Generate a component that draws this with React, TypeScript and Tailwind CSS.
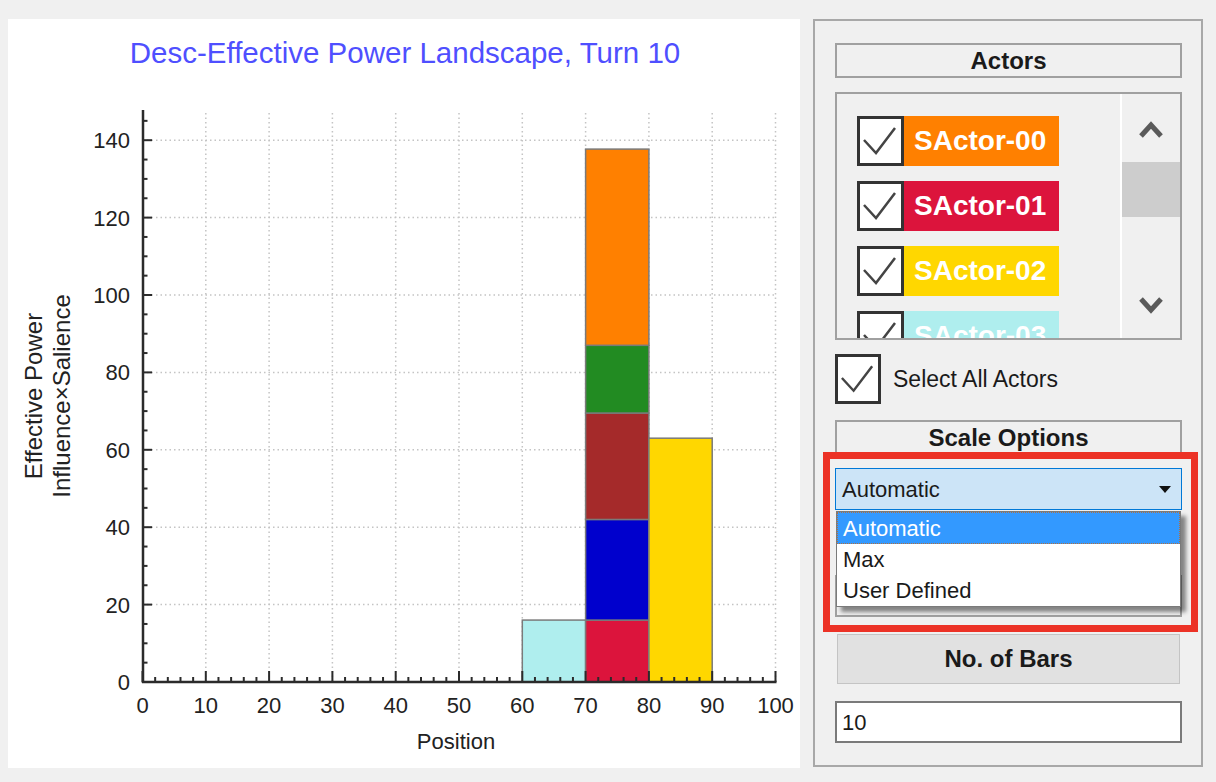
import React from "react";

const X = (v: number) => 142.5 + v * 6.33;
const Y = (v: number) => 682 - v * 3.87;

interface Segment {
  pos: number;
  from: number;
  to: number;
  color: string;
}

const segments: Segment[] = [
  { pos: 60, from: 0, to: 16, color: "#afeeee" },
  { pos: 70, from: 0, to: 16, color: "#dc143c" },
  { pos: 70, from: 16, to: 42, color: "#0000cd" },
  { pos: 70, from: 42, to: 69.5, color: "#a52a2a" },
  { pos: 70, from: 69.5, to: 87, color: "#228b22" },
  { pos: 70, from: 87, to: 137.7, color: "#ff8000" },
  { pos: 80, from: 0, to: 63, color: "#ffd700" },
];

const actors = [
  { name: "SActor-00", color: "bg-[#ff8000]" },
  { name: "SActor-01", color: "bg-[#dc143c]" },
  { name: "SActor-02", color: "bg-[#ffd700]" },
  { name: "SActor-03", color: "bg-[#afeeee]" },
];

const font = { fontFamily: '"Liberation Sans", Arial, sans-serif' };

function Chart() {
  const yTicks: number[] = [];
  for (let v = 0; v <= 145; v += 5) yTicks.push(v);
  const xTicks: number[] = [];
  for (let v = 0; v <= 100; v += 2) xTicks.push(v);
  const grid = [20, 40, 60, 80, 100, 120, 140];
  const vgrid = [10, 20, 30, 40, 50, 60, 70, 80, 90, 100];

  return (
    <svg width="792" height="749" viewBox="8 19 792 749" style={font}>
      <text x="405" y="63" textAnchor="middle" fontSize="29.5" fill="#4f4fff">
        Desc-Effective Power Landscape, Turn 10
      </text>

      {grid.map((v) => (
        <line key={"h" + v} x1={X(0)} x2={X(100)} y1={Y(v)} y2={Y(v)} stroke="#c4c4c4" strokeWidth="1.5" strokeDasharray="1.5 3" />
      ))}
      {vgrid.map((v) => (
        <line key={"v" + v} x1={X(v)} x2={X(v)} y1={113} y2={682} stroke="#c4c4c4" strokeWidth="1.5" strokeDasharray="1.5 3" />
      ))}

      {segments.map((s, i) => (
        <rect
          key={i}
          x={X(s.pos)}
          y={Y(s.to)}
          width={X(s.pos + 10) - X(s.pos)}
          height={Y(s.from) - Y(s.to)}
          fill={s.color}
          stroke="#7a7a7a"
          strokeWidth="1.5"
        />
      ))}

      <line x1="143" x2="143" y1="110" y2="683" stroke="#2b2b2b" strokeWidth="2.5" />
      <line x1="142" x2={X(100) + 1} y1="682" y2="682" stroke="#2b2b2b" strokeWidth="2.5" />

      {yTicks.map((v) => (
        <line key={"yt" + v} x1="143" x2={v % 20 === 0 ? 152 : 147.5} y1={Y(v)} y2={Y(v)} stroke="#2b2b2b" strokeWidth="2" />
      ))}
      {xTicks.map((v) => (
        <line key={"xt" + v} x1={X(v)} x2={X(v)} y1="682" y2={v % 10 === 0 ? 671 : 677} stroke="#2b2b2b" strokeWidth="2" />
      ))}

      {[0, 20, 40, 60, 80, 100, 120, 140].map((v) => (
        <text key={"yl" + v} x="130" y={Y(v) + 8} textAnchor="end" fontSize="22" fill="#222">
          {v}
        </text>
      ))}
      {[0, 10, 20, 30, 40, 50, 60, 70, 80, 90, 100].map((v) => (
        <text key={"xl" + v} x={X(v)} y="713" textAnchor="middle" fontSize="22" fill="#222">
          {v}
        </text>
      ))}

      <text transform="translate(42,396) rotate(-90)" textAnchor="middle" fontSize="24" fill="#222">
        Effective Power
      </text>
      <text transform="translate(70,396) rotate(-90)" textAnchor="middle" fontSize="24" fill="#222">
        Influence×Salience
      </text>
      <text x="456" y="749" textAnchor="middle" fontSize="22" fill="#222">
        Position
      </text>
    </svg>
  );
}

function Check({ w, h }: { w: string; h: string }) {
  return (
    <div className={`${w} ${h} shrink-0 border-[3px] border-[#333] bg-white`}>
      <svg width="100%" height="100%" viewBox="0 0 41 44">
        <polyline points="4,21 16,34 35,9" fill="none" stroke="#444" strokeWidth="2.5" />
      </svg>
    </div>
  );
}

function Chevron({ up }: { up?: boolean }) {
  return (
    <svg width="24" height="17" viewBox="0 0 24 17" className="mx-auto block">
      <polyline
        points={up ? "2,15 12,4 22,15" : "2,2 12,13 22,2"}
        fill="none"
        stroke="#5a5a5a"
        strokeWidth="5"
      />
    </svg>
  );
}

export default function App() {
  return (
    <div className="relative flex w-[1216px] h-[782px] bg-[#f0f0f0] pl-[8px] pt-[19px] gap-[13px] text-[#1a1a1a]" style={font}>
      <div className="w-[792px] h-[749px] bg-white">
        <Chart />
      </div>

      <div className="flex flex-col w-[390px] h-[748px] border-2 border-[#a8a8a8] pl-[20px] pr-[19px] pt-[22px]">
        <div className="h-[35px] border-2 border-[#a0a0a0] flex items-center justify-center text-[24px] font-bold">
          Actors
        </div>

        <div className="mt-[14px] h-[248px] border-2 border-[#a0a0a0] flex overflow-hidden">
          <div className="flex-1 flex flex-col gap-[15px] pt-[22px] pl-[20px]">
            {actors.map((a) => (
              <div key={a.name} className="flex h-[50px] shrink-0">
                <Check w="w-[47px]" h="h-[50px]" />
                <div className={`${a.color} w-[155px] h-[50px] flex items-center pl-[10px] text-white font-bold text-[28px]`}>
                  {a.name}
                </div>
              </div>
            ))}
          </div>
          <div className="w-[60px] border-l-2 border-white flex flex-col">
            <div className="mt-[27px]">
              <Chevron up />
            </div>
            <div className="mt-[24px] h-[55px] bg-[#cdcdcd]" />
            <div className="mt-[80px]">
              <Chevron />
            </div>
          </div>
        </div>

        <div className="mt-[14px] flex items-center gap-[12px]">
          <Check w="w-[46px]" h="h-[50px]" />
          <span className="text-[23px]">Select All Actors</span>
        </div>

        <div className="mt-[16px] h-[35px] border-2 border-[#a0a0a0] flex items-center justify-center text-[24px] font-bold">
          Scale Options
        </div>

        <div className="relative mt-[13px] h-[42px] border border-[#0078d7] bg-[#cce4f7] flex items-center justify-between pl-[6px] pr-[10px] text-[22px]">
          <span>Automatic</span>
          <svg width="12" height="7" viewBox="0 0 12 7">
            <polygon points="0,0 12,0 6,7" fill="#111" />
          </svg>
          <div className="absolute left-0 right-0 top-[42px] z-10 h-[96px] border border-[#7a7a7a] bg-white shadow-[5px_5px_4px_rgba(0,0,0,0.45)] flex flex-col text-[22px]">
            <div className="h-[32px] bg-[#3399ff] text-white flex items-center pl-[5px] border border-dotted border-[#b07040]">
              Automatic
            </div>
            <div className="h-[31px] flex items-center pl-[6px]">Max</div>
            <div className="h-[31px] flex items-center pl-[6px]">User Defined</div>
          </div>
        </div>

        <div className="mt-[65px] h-[42px] border-2 border-[#a0a0a0] bg-[#f0f0f0]" />

        <div className="mt-[17px] mx-[2px] h-[50px] bg-[#e1e1e1] border border-[#c4c4c4] flex items-center justify-center text-[24px] font-bold">
          No. of Bars
        </div>

        <div className="mt-[17px] h-[42px] border-2 border-[#7a7a7a] bg-white flex items-center pl-[5px] text-[22px]">
          10
        </div>
      </div>

      <div className="absolute left-[823px] top-[452px] w-[375px] h-[180px] border-[7px] border-[#ec3226] z-20 pointer-events-none" />
    </div>
  );
}
